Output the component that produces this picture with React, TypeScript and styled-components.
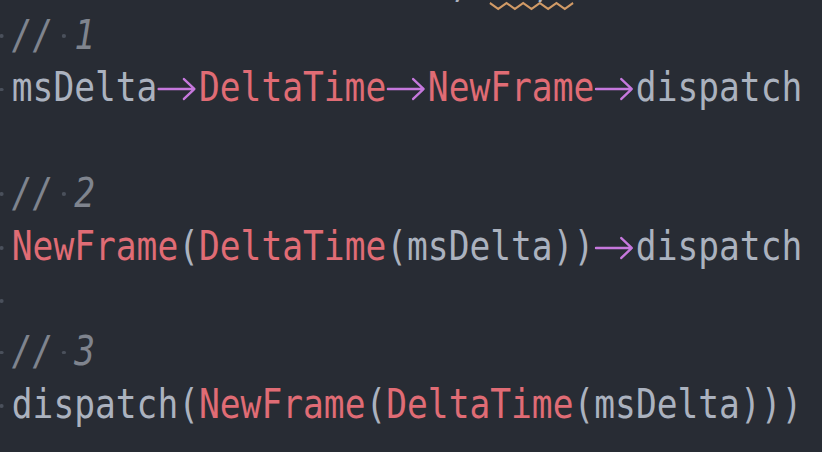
import React from "react";
import styled, { createGlobalStyle } from "styled-components";

const FONT_PX = 41;
const CH = 0.602 * FONT_PX;
const SCALE = 20.8 / CH;
const LINE = 52.8;

const Global = createGlobalStyle`
  html, body { margin: 0; padding: 0; background: #282c34; }
  body { width: 822px; height: 452px; overflow: hidden; }
`;

const Screen = styled.main`
  width: 822px;
  height: 452px;
  overflow: hidden;
  background: #282c34;
`;

const Editor = styled.div`
  margin-top: -44.2px;
  margin-left: -8.8px;
  width: ${Math.ceil(900 / SCALE)}px;
  transform: scaleX(${SCALE});
  transform-origin: 0 0;
  font-family: "DejaVu Sans Mono", "Liberation Mono", monospace;
  font-size: ${FONT_PX}px;
  color: #abb2bf;
`;

const Line = styled.div`
  height: ${LINE}px;
  line-height: ${LINE}px;
  white-space: pre;
`;

type Kind = "plain" | "type" | "comment";

const colors: Record<Kind, string> = {
  plain: "#abb2bf",
  type: "#e06c75",
  comment: "#7f848e",
};

const Tok = styled.span<{ $k: Kind }>`
  color: ${(p) => colors[p.$k]};
  font-style: ${(p) => (p.$k === "comment" ? "italic" : "normal")};
`;

/* rendered whitespace marker: a space with a small round dot */
const Space = styled.span<{ $lift: number }>`
  display: inline-block;
  position: relative;
  width: 1ch;
  height: 1px;
  vertical-align: baseline;
  &::after {
    content: "";
    position: absolute;
    left: 50%;
    bottom: ${(p) => p.$lift}px;
    width: 4.6px;
    height: 3.9px;
    margin-left: -2.3px;
    border-radius: 50%;
    background: #4a505b;
  }
`;

const ArrowBox = styled.span`
  display: inline-block;
  width: 2ch;
  height: 24px;
  vertical-align: baseline;
  svg {
    display: block;
  }
`;

const Squig = styled.span`
  position: relative;
`;

const SquigSvg = styled.svg`
  position: absolute;
  left: 0;
  top: 44.6px;
  width: 4ch;
  height: 8px;
  overflow: visible;
`;

const Arrow = () => {
  const w = 2 * CH;
  return (
    <ArrowBox>
      <svg width={w} height={24} viewBox={`0 0 ${w} 24`}>
        <path
          d={`M1.8 12 H44.3 M31.8 2 L44.4 12 L31.8 22`}
          fill="none"
          stroke="#c678dd"
          strokeWidth={2.6}
          strokeLinecap="round"
          strokeLinejoin="round"
        />
      </svg>
    </ArrowBox>
  );
};

const Squiggle = ({ children }: { children: React.ReactNode }) => {
  const w = 4 * CH;
  const periods = 5;
  const per = w / periods;
  const pts: string[] = [];
  for (let i = 0; i <= periods; i++) {
    pts.push(`${(i * per).toFixed(2)},1`);
    if (i < periods) pts.push(`${(i * per + per / 2).toFixed(2)},7`);
  }
  return (
    <Squig>
      {children}
      <SquigSvg viewBox={`0 0 ${w} 8`} preserveAspectRatio="none">
        <polyline
          points={pts.join(" ")}
          fill="none"
          stroke="#d19a66"
          strokeWidth={2.2}
          strokeLinejoin="miter"
        />
      </SquigSvg>
    </Squig>
  );
};

type Piece = [Kind, string] | ["arrow"] | ["ws"];

const W: Piece = ["ws"];
const A: Piece = ["arrow"];

const code: Piece[][] = [
  [W, ["comment", "//"], W, ["comment", "1"]],
  [W, ["plain", "msDelta"], A, ["type", "DeltaTime"], A, ["type", "NewFrame"], A, ["plain", "dispatch"]],
  [],
  [W, ["comment", "//"], W, ["comment", "2"]],
  [W, ["type", "NewFrame"], ["plain", "("], ["type", "DeltaTime"], ["plain", "(msDelta))"], A, ["plain", "dispatch"]],
  [W],
  [W, ["comment", "//"], W, ["comment", "3"]],
  [W, ["plain", "dispatch("], ["type", "NewFrame"], ["plain", "("], ["type", "DeltaTime"], ["plain", "(msDelta)))"]],
];

const renderPiece = (p: Piece, i: number, isComment: boolean) => {
  if (p[0] === "arrow") return <Arrow key={i} />;
  if (p[0] === "ws") return <Space key={i} $lift={isComment ? 11 : 10} />;
  return (
    <Tok key={i} $k={p[0]}>
      {p[1]}
    </Tok>
  );
};

const LEAD = " ".repeat(22);

export default function App() {
  return (
    <Screen>
      <Global />
      <Editor>
        <Line>
          <Tok $k="plain">{LEAD + ", "}</Tok>
          <Squiggle>
            <Tok $k="plain">{"  , "}</Tok>
          </Squiggle>
        </Line>
        {code.map((line, li) => {
          const isComment = line.some((p) => p[0] === "comment");
          return <Line key={li}>{line.map((p, i) => renderPiece(p, i, isComment))}</Line>;
        })}
      </Editor>
    </Screen>
  );
}
